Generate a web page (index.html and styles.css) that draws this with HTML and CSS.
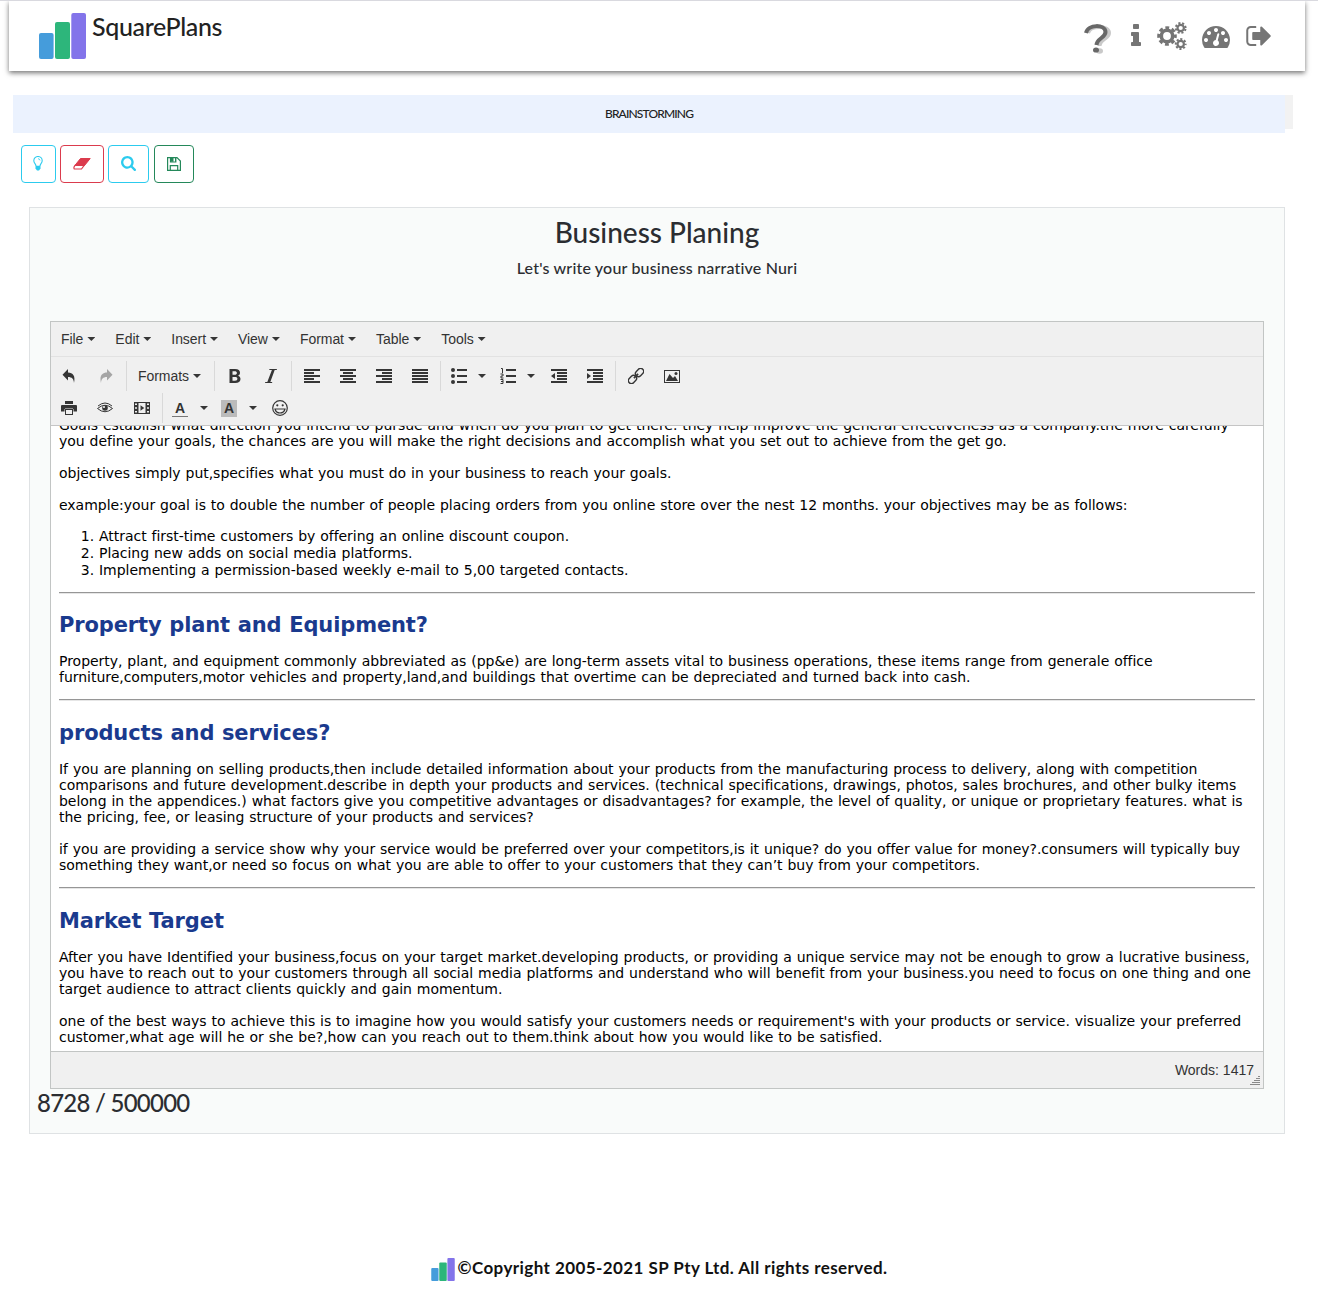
FILE: index.html
```html
<!DOCTYPE html>
<html lang="en">
<head>
<meta charset="utf-8">
<title>SquarePlans</title>
<link rel="stylesheet" href="styles.css">
</head>
<body>
<header class="header">
  <div class="brand">
    <svg class="logo" viewBox="0 0 47 46"><rect y="20" width="14.6" height="26" rx="2" fill="#459cdb"/><rect x="16" y="9" width="15" height="37" rx="2" fill="#2db67b"/><rect x="32.3" width="14.7" height="46" rx="2" fill="#8374ea"/></svg>
    <span class="brand-name">SquarePlans</span>
  </div>
  <nav class="nav">
    <svg class="n-help" viewBox="0 0 28 30"><g fill="none" stroke-width="4"><path d="M4 9C6 1 25 1 25 9C25 15 16 14 15.500 22" stroke="#c9c9c9"/><path d="M2 9C4 0 21 0 21.500 8C21.500 14 13 14 12.500 21" stroke="#686868"/></g><ellipse cx="15.500" cy="27" rx="3.500" ry="2.700" fill="#c9c9c9"/><ellipse cx="12" cy="26" rx="3" ry="2.600" fill="#686868"/></svg>
    <svg class="n-info" viewBox="0 128 640 1408"><path d="M640 1344v128q0 26-19 45t-45 19h-512q-26 0-45-19t-19-45v-128q0-26 19-45t45-19h64v-384h-64q-26 0-45-19t-19-45v-128q0-26 19-45t45-19h384q26 0 45 19t19 45v576h64q26 0 45 19t19 45zM512 192v192q0 26-19 45t-45 19h-256q-26 0-45-19t-19-45v-192q0-26 19-45t45-19h256q26 0 45 19t19 45z"/></svg>
    <svg class="n-cogs" viewBox="0 0 30 28"><g fill="none" stroke="#757575"><circle cx="10" cy="14" r="5.700" stroke-width="3.600"/><circle cx="10" cy="14" r="8.300" stroke-width="3" stroke-dasharray="3.800 2.719" stroke-dashoffset="1.900"/><circle cx="23.700" cy="6" r="3.200" stroke-width="2.200"/><circle cx="23.700" cy="6" r="4.900" stroke-width="2" stroke-dasharray="2.100 1.749" stroke-dashoffset="3"/><circle cx="23.700" cy="22" r="3.200" stroke-width="2.200"/><circle cx="23.700" cy="22" r="4.900" stroke-width="2" stroke-dasharray="2.100 1.749" stroke-dashoffset="1"/></g></svg>
    <svg class="n-dash" viewBox="0 256 1792 1408"><path d="M384 1152q0-53-37.500-90.500t-90.500-37.500-90.500 37.500-37.500 90.500 37.500 90.500 90.500 37.500 90.500-37.500 37.500-90.500zM576 704q0-53-37.500-90.500t-90.500-37.500-90.500 37.500-37.500 90.500 37.500 90.500 90.500 37.500 90.500-37.500 37.500-90.500zM1004 1185l101-382q6-26-7.500-48.500t-38.500-29.500-48 6.500-30 39.500l-101 382q-60 5-107 43.500t-63 98.500q-20 77 20 146t117 89 146-20 89-117q16-60-6-117t-72-91zM1664 1152q0-53-37.500-90.500t-90.500-37.500-90.500 37.500-37.500 90.500 37.500 90.500 90.500 37.500 90.500-37.500 37.500-90.500zM1024 512q0-53-37.500-90.500t-90.500-37.500-90.500 37.500-37.500 90.500 37.500 90.500 90.500 37.500 90.500-37.500 37.500-90.500zM1472 704q0-53-37.500-90.500t-90.500-37.500-90.500 37.500-37.500 90.500 37.500 90.500 90.500 37.500 90.500-37.500 37.500-90.500zM1792 1152q0 261-141 483-19 29-54 29h-1402q-35 0-54-29-141-221-141-483 0-182 71-348t191-286 286-191 348-71 348 71 286 191 191 286 71 348z"/></svg>
    <svg class="n-out" viewBox="0 256 1568 1280"><path d="M640 1440q0 4 1 20t.5 26.500-3 23.500-10 19.500-20.500 6.500h-320q-119 0-203.500-84.500t-84.500-203.500v-704q0-119 84.500-203.500t203.500-84.500h320q13 0 22.500 9.500t9.500 22.500q0 4 1 20t.5 26.500-3 23.500-10 19.500-20.500 6.500h-320q-66 0-113 47t-47 113v704q0 66 47 113t113 47h312l11.500 1 11.500 3 8 5.500 7 9 2 13.500zM1568 896q0 26-19 45l-544 544q-19 19-45 19t-45-19-19-45v-288h-448q-26 0-45-19t-19-45v-384q0-26 19-45t45-19h448v-288q0-26 19-45t45-19 45 19l544 544q19 19 19 45z"/></svg>
  </nav>
</header>

<div class="banner"><div class="banner-label"><span>BRAINSTORMING</span></div><div class="banner-end"></div></div>

<div class="actions">
  <button class="act act-idea"><svg width="10" height="15" viewBox="0 0 10 15"><path d="M3 10C3 8 .8 7.200.8 4.700a4.200 4.200 0 0 1 8.400 0C9.200 7.200 7 8 7 10" fill="none" stroke="currentColor" stroke-width="1.100"/><path d="M5 2.700q1.700 0 2 1.700" fill="none" stroke="currentColor" stroke-width=".8"/><path d="M2.500 9.800h5v2.700L6 14.500H4l-1.500-2z" fill="currentColor"/></svg></button>
  <button class="act act-erase"><svg width="18" height="12" viewBox="0 0 18 12"><path d="M7.500.5h9.700L11.700 7.300H2z" fill="currentColor" stroke="currentColor" stroke-linejoin="round"/><path d="M2 7.300h9.200L8.500 11H1.300Q.2 9.700 2 7.300z" fill="none" stroke="currentColor" stroke-width="1.200"/></svg></button>
  <button class="act act-search"><svg width="15" height="15" viewBox="0 128 1664 1664"><path fill="currentColor" d="M1152 832q0-185-131.500-316.500t-316.500-131.500-316.500 131.500-131.500 316.500 131.500 316.500 316.500 131.500 316.500-131.500 131.500-316.500zM1664 1664q0 52-38 90t-90 38q-54 0-90-38l-343-342q-179 124-399 124-143 0-273.500-55.500t-225-150-150-225-55.500-273.500 55.500-273.500 150-225 225-150 273.500-55.500 273.500 55.500 225 150 150 225 55.500 273.500q0 220-124 399l343 343q37 37 37 90z"/></svg></button>
  <button class="act act-save"><svg width="14" height="14" viewBox="0 0 14 14"><g fill="none" stroke="currentColor" stroke-width="1.200"><path d="M.6.600h9.400l3.400 3.400v9.400H.6z"/><path d="M3.300 13V8.600h7.400V13M3.500 1v4h5.300V1"/></g><path d="M3.500.6h3v4.200h-3zM8 .6h1v4.200H8z" fill="currentColor"/></svg></button>
</div>

<main class="panel">
  <h1 class="title">Business Planing</h1>
  <p class="subtitle">Let's write your business narrative Nuri</p>
  <section class="editor">
    <div class="menubar">
      <span class="menu">File<i class="caret"></i></span><span class="menu">Edit<i class="caret"></i></span><span class="menu">Insert<i class="caret"></i></span><span class="menu">View<i class="caret"></i></span><span class="menu">Format<i class="caret"></i></span><span class="menu">Table<i class="caret"></i></span><span class="menu">Tools<i class="caret"></i></span>
    </div>
    <div class="toolbar">
      <div class="tools">
        <div class="group g-history">
          <span class="tool"><svg viewBox="0 0 16 16"><path d="M7 1v3.500C12 4.500 14.700 8 13 15c-.2-4-2-6-6-6v3.500L1.500 6.700z"/></svg></span>
          <span class="tool faded"><svg viewBox="0 0 16 16"><path d="M9 1v3.500C4 4.500 1.300 8 3 15c.2-4 2-6 6-6v3.500l5.500-5.800z"/></svg></span>
        </div>
        <div class="group g-formats"><span class="menu">Formats<i class="caret"></i></span></div>
        <div class="group g-style">
          <span class="tool"><svg viewBox="0 0 16 16"><path fill-rule="evenodd" d="M2.500 1H8c3.500 0 5 1.500 5 3.700 0 1.500-.8 2.500-2 3 1.700.5 2.500 1.700 2.500 3.200C13.500 13.500 11.500 15 8.300 15H2.500zM5.500 3.200v3.500h2c1.600 0 2.400-.6 2.400-1.800S9.100 3.200 7.500 3.200zM5.500 8.900v3.900H8c1.600 0 2.400-.7 2.400-2S9.600 8.900 8 8.900z"/></svg></span>
          <span class="tool"><svg viewBox="0 0 16 16"><path d="M6.500 1H14l-.3 1h-2L7.300 14h2l-.3 1H2l.3-1h2L8.900 2H6.200z"/></svg></span>
        </div>
        <div class="group g-align">
          <span class="tool"><svg viewBox="0 0 16 16"><path d="M0 1h16v2H0zM0 4h10v2H0zM0 7h16v2H0zM0 10h10v2H0zM0 13h16v2H0z"/></svg></span>
          <span class="tool"><svg viewBox="0 0 16 16"><path d="M0 1h16v2H0zM3 4h10v2H3zM0 7h16v2H0zM3 10h10v2H3zM0 13h16v2H0z"/></svg></span>
          <span class="tool"><svg viewBox="0 0 16 16"><path d="M0 1h16v2H0zM6 4h10v2H6zM0 7h16v2H0zM6 10h10v2H6zM0 13h16v2H0z"/></svg></span>
          <span class="tool"><svg viewBox="0 0 16 16"><path d="M0 1h16v2H0zM0 4h16v2H0zM0 7h16v2H0zM0 10h16v2H0zM0 13h16v2H0z"/></svg></span>
        </div>
        <div class="group g-lists">
          <span class="tool narrow"><svg viewBox="0 0 16 16"><circle cx="2" cy="2" r="2"/><circle cx="2" cy="8" r="2"/><circle cx="2" cy="14" r="2"/><path d="M6 1h10v2H6zM6 7h10v2H6zM6 13h10v2H6z"/></svg></span><span class="drop"><i class="caret"></i></span>
          <span class="tool narrow second"><svg viewBox="0 0 16 16"><path d="M6 1h10v2H6zM6 7h10v2H6zM6 13h10v2H6z"/><path d="M1 .5h1.500V5M.5 6H3v2H1v2h2.500M.5 11.500H3v4H.5M1 13.500h2" fill="none" stroke="#363636"/></svg></span><span class="drop"><i class="caret"></i></span>
          <span class="tool outdent"><svg viewBox="0 0 16 16"><path d="M0 1h16v2H0zM6 4h10v2H6zM6 7h10v2H6zM6 10h10v2H6zM0 13h16v2H0zM4 5v6L0 8z"/></svg></span>
          <span class="tool"><svg viewBox="0 0 16 16"><path d="M0 1h16v2H0zM6 4h10v2H6zM6 7h10v2H6zM6 10h10v2H6zM0 13h16v2H0zM0 5v6l4-3z"/></svg></span>
        </div>
        <div class="group g-insert">
          <span class="tool"><svg viewBox="0 0 16 16"><g fill="none" stroke="#363636" stroke-width="1.400" transform="rotate(-45 8 8)"><rect x="-1.500" y="5" width="9" height="6" rx="3"/><rect x="8.500" y="5" width="9" height="6" rx="3"/><path d="M5 8h6" stroke-width="1.600"/></g></svg></span>
          <span class="tool"><svg viewBox="0 0 16 16"><path fill-rule="evenodd" d="M0 2h16v13H0zM1 3v11h14V3zM2 13l3.500-7L9 10l2-2 3 5z"/><circle cx="12" cy="5.500" r="1.500"/></svg></span>
        </div>
      </div>
      <div class="tools">
        <div class="group g-output">
          <span class="tool"><svg viewBox="0 0 16 16"><path fill-rule="evenodd" d="M4 1h8v3H4zM1 5h14q1 0 1 1v5.500h-3.500V9h-9v2.500H0V6q0-1 1-1zM4 8.500h8V15H4zM5 10v4h6v-4z"/></svg></span>
          <span class="tool"><svg viewBox="0 0 16 16"><path d="M.5 8.500Q8 2 15.500 8.500 8 15 .5 8.500z" fill="none" stroke="#363636"/><path d="M1 6Q8 0 15 6" fill="none" stroke="#363636"/><circle cx="8" cy="8" r="2.800"/><circle cx="7" cy="7" r="1" fill="#fff"/></svg></span>
          <span class="tool"><svg viewBox="0 0 16 16"><path fill-rule="evenodd" d="M0 2h16v12H0zM4.500 3v10h7V3zM1 3.500v1.500h2V3.500zM1 7.200v1.600h2V7.200zM1 11v1.500h2V11zM13 3.500v1.500h2V3.500zM13 7.200v1.600h2V7.200zM13 11v1.500h2V11zM6.500 5.200v5.600L10.300 8z"/></svg></span>
        </div>
        <div class="group g-color">
          <span class="tool color"><b class="letter">A</b></span><span class="drop wide"><i class="caret"></i></span>
          <span class="tool color back"><b class="letter filled">A</b></span><span class="drop wide"><i class="caret"></i></span>
          <span class="tool"><svg viewBox="0 0 16 16"><g fill="none" stroke="#363636" stroke-width="1.200"><circle cx="8" cy="8" r="7.300"/><path d="M3 9h10q-1 4-5 4T3 9z"/></g><circle cx="5.300" cy="5.300" r="1.100"/><circle cx="10.700" cy="5.300" r="1.100"/></svg></span>
        </div>
      </div>
    </div>
    <article class="content">
      <p>Goals establish what direction you intend to pursue and when do you plan to get there. they help improve the general effectiveness as a company.the more carefully<br>you define your goals, the chances are you will make the right decisions and accomplish what you set out to achieve from the get go.</p>
      <p>objectives simply put,specifies what you must do in your business to reach your goals.</p>
      <p>example:your goal is to double the number of people placing orders from you online store over the nest 12 months. your objectives may be as follows:</p>
      <ol><li>Attract first-time customers by offering an online discount coupon.</li><li>Placing new adds on social media platforms.</li><li>Implementing a permission-based weekly e-mail to 5,00 targeted contacts.</li></ol>
      <hr>
      <h2>Property plant and Equipment?</h2>
      <p>Property, plant, and equipment commonly abbreviated as (pp&amp;e) are long-term assets vital to business operations, these items range from generale office<br>furniture,computers,motor vehicles and property,land,and buildings that overtime can be depreciated and turned back into cash.</p>
      <hr>
      <h2>products and services?</h2>
      <p>If you are planning on selling products,then include detailed information about your products from the manufacturing process to delivery, along with competition<br>comparisons and future development.describe in depth your products and services. (technical specifications, drawings, photos, sales brochures, and other bulky items<br>belong in the appendices.) what factors give you competitive advantages or disadvantages? for example, the level of quality, or unique or proprietary features. what is<br>the pricing, fee, or leasing structure of your products and services?</p>
      <p>if you are providing a service show why your service would be preferred over your competitors,is it unique? do you offer value for money?.consumers will typically buy<br>something they want,or need so focus on what you are able to offer to your customers that they can’t buy from your competitors.</p>
      <hr>
      <h2>Market Target</h2>
      <p>After you have Identified your business,focus on your target market.developing products, or providing a unique service may not be enough to grow a lucrative business,<br>you have to reach out to your customers through all social media platforms and understand who will benefit from your business.you need to focus on one thing and one<br>target audience to attract clients quickly and gain momentum.</p>
      <p>one of the best ways to achieve this is to imagine how you would satisfy your customers needs or requirement's with your products or service. visualize your preferred<br>customer,what age will he or she be?,how can you reach out to them.think about how you would like to be satisfied.</p>
    </article>
    <div class="status"><span>Words: 1417</span><svg class="grip" viewBox="0 0 10 10"><path d="M8 .5h2M6 2.500h4M4 4.500h6M2 6.500h8M0 8.500h10" stroke="#8a8a8a"/></svg></div>
  </section>
  <div class="count">8728 / 500000</div>
</main>

<footer class="footer">
  <svg class="logo-small" viewBox="0 0 47 46"><rect y="20" width="14.6" height="26" rx="2" fill="#459cdb"/><rect x="16" y="9" width="15" height="37" rx="2" fill="#2db67b"/><rect x="32.300" width="14.700" height="46" rx="2" fill="#8374ea"/></svg>
  <span>©Copyright 2005-2021 SP Pty Ltd. All rights reserved.</span>
</footer>
</body>
</html>
```
FILE: styles.css
```css
* { box-sizing: border-box; }
body { margin: 0; height: 1303px; overflow: hidden; background: #fff; border-top: 1px solid #d9d9df; font-family: Lato, "Open Sans", sans-serif; font-weight: 500; color: #2b2d31; }
svg { display: block; flex: none; }

.header { height: 70px; margin: 0 13px 0 9px; padding: 12px 34px 0 30px; display: flex; justify-content: space-between; background: #fff; box-shadow: 0 2px 5px rgba(0,0,0,.55); clip-path: inset(0 -10px -10px -10px); }
.brand { display: flex; gap: 6px; }
.logo { width: 47px; height: 46px; }
.brand-name { margin-top: -1px; font-size: 25px; line-height: 28px; letter-spacing: -.35px; color: #222; }
.nav { display: flex; align-items: flex-start; }
.nav svg { fill: #757575; }
.n-help { width: 28px; height: 30px; margin: 11px 19px 0 0; }
.n-info { width: 10px; height: 22px; margin: 11px 16px 0 0; }
.n-cogs { width: 30px; height: 28px; margin: 9px 15px 0 0; }
.n-dash { width: 28px; height: 22px; margin: 13px 16px 0 0; }
.n-out { width: 25px; height: 20px; margin: 13px 0 0; }

.banner { display: flex; margin: 24px 25px 0 13px; height: 38px; }
.banner-label { flex: 1; display: flex; align-items: center; justify-content: center; padding-bottom: 2px; background: #ebf2fe; font-size: 12px; letter-spacing: -.85px; color: #222; }
.banner-end { width: 8px; height: 34px; background: #f2f2f2; }

.actions { display: flex; margin: 12px 0 0 21px; height: 38px; }
.act { display: flex; align-items: center; justify-content: center; padding: 0 0 1px; background: #fff; border: 1px solid; border-radius: 4px; }
.act-idea { width: 35px; color: #2ccbee; margin-right: 4px; padding-right: 1px; }
.act-erase { width: 44px; color: #db3b4d; margin-right: 4px; }
.act-search { width: 41px; color: #2ccbee; margin-right: 5px; }
.act-save { width: 40px; color: #24885a; }

.panel { margin: 24px 33px 0 29px; height: 927px; background: #f9fbfa; border: 1px solid #dfe2e4; padding: 7px 20px 0; }
.title { margin: 0; font-size: 28px; line-height: 34px; font-weight: 500; text-align: center; }
.subtitle { margin: 7px 0 0; font-size: 16px; line-height: 24px; letter-spacing: .18px; text-align: center; }

.editor { margin-top: 41px; height: 768px; border: 1px solid #c2c5c4; display: flex; flex-direction: column; background: #fff; font-family: "Liberation Sans", sans-serif; font-size: 14px; font-weight: 400; color: #333; }
.menubar { display: flex; height: 35px; flex: none; background: #f0f0f0; border-bottom: 1px solid #e2e2e2; }
.menu { display: flex; align-items: center; padding: 0 10px; letter-spacing: -.05px; }
.caret { margin-left: 4px; width: 8px; height: 4px; background: #363636; clip-path: polygon(0 0, 100% 0, 50% 100%); }
.toolbar { height: 69px; flex: none; background: #f0f0f0; border-bottom: 1px solid #c5c5c5; padding-top: 3px; }
.tools { display: flex; height: 32px; }
.group { display: flex; height: 30px; margin-top: 1px; border-right: 1px solid #d9d9d9; padding-left: 2px; }
.tool { width: 36px; display: flex; align-items: center; justify-content: center; }
.tool svg { width: 16px; height: 16px; fill: #363636; }
.faded { opacity: .4; }
.narrow { width: 32px; }
.second { margin-left: 3px; }
.outdent { margin-left: 3px; }
.drop { width: 14px; display: flex; align-items: center; justify-content: center; }
.drop .caret { margin: 0; }
.g-history { width: 76px; padding-left: 0; }
.g-history .faded { margin-left: 1px; }
.g-formats { width: 88px; padding-left: 1px; }
.g-style { width: 77px; }
.g-align { width: 149px; }
.g-lists { width: 175px; }
.g-insert, .g-color { border: 0; }
.g-output { width: 112px; padding-left: 0; }
.g-output .tool { margin-right: .4px; }
.color { width: 30px; }
.wide { width: 18px; }
.back { margin-left: 1px; }
.letter { width: 16px; height: 17px; font: bold 14px/16px "Liberation Sans", sans-serif; text-align: center; border-bottom: 1px solid #777; margin-top: 1px; }
.filled { background: #bbb; border-color: #bbb; }

.content { flex: 1; min-height: 0; overflow: hidden; padding: 0 8px; font-family: "DejaVu Sans", sans-serif; font-size: 14px; line-height: 16px; letter-spacing: -.025px; word-spacing: .48px; color: #000; white-space: nowrap; }
.content p { margin: 0 0 16px; }
.content p:first-child { margin-top: -9px; }
.content ol { margin: -1px 0 0; padding-left: 40px; line-height: 17px; }
.content hr { margin: 13px 0 0; border: 0; border-top: 1px solid #969696; border-bottom: 1px solid #e6e6e6; }
.content p + hr { margin-top: -2px; }
.content h2 { margin: 19px 0 15px; font-size: 21px; line-height: 26px; letter-spacing: -.12px; color: #1a3a8e; }
.content ol + hr + h2 { margin-top: 18px; }
.status { height: 37px; flex: none; background: #f0f0f0; border-top: 1px solid #c2c5c4; display: flex; justify-content: flex-end; align-items: center; padding-right: 3px; }
.grip { width: 10px; height: 10px; align-self: flex-end; margin: 0 0 2px -4px; }
.count { margin: 0 0 0 -13px; font-size: 24px; line-height: 28px; letter-spacing: -.75px; }

.footer { margin-top: 121px; display: flex; justify-content: center; gap: 3px; font-size: 17px; line-height: 26px; letter-spacing: .42px; font-weight: 700; color: #111; }
.logo-small { width: 24px; height: 23px; margin-top: 3px; }
```
